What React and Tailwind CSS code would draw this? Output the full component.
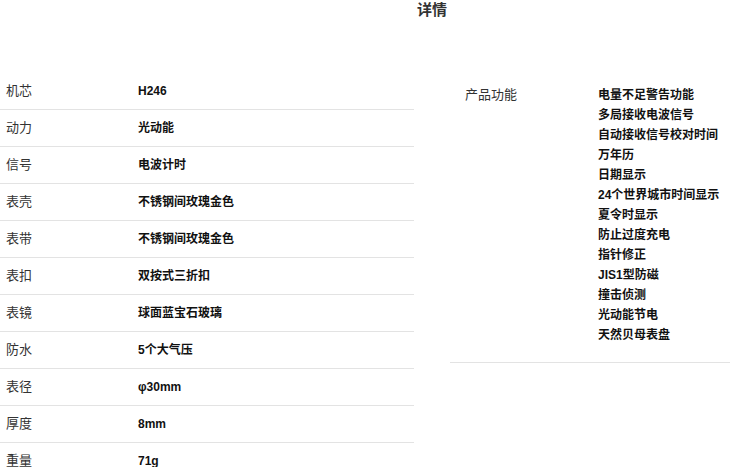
const specs = [
  ["机芯", "H246"],
  ["动力", "光动能"],
  ["信号", "电波计时"],
  ["表壳", "不锈钢间玫瑰金色"],
  ["表带", "不锈钢间玫瑰金色"],
  ["表扣", "双按式三折扣"],
  ["表镜", "球面蓝宝石玻璃"],
  ["防水", "5个大气压"],
  ["表径", "φ30mm"],
  ["厚度", "8mm"],
  ["重量", "71g"],
];

const features = [
  "电量不足警告功能",
  "多局接收电波信号",
  "自动接收信号校对时间",
  "万年历",
  "日期显示",
  "24个世界城市时间显示",
  "夏令时显示",
  "防止过度充电",
  "指针修正",
  "JIS1型防磁",
  "撞击侦测",
  "光动能节电",
  "天然贝母表盘",
];

const font = { fontFamily: '"Liberation Sans", "Noto Sans CJK SC", sans-serif' };

export default function App() {
  return (
    <main className="h-[467px] w-[730px] overflow-hidden bg-white" style={font}>
      <div className="w-[864px]">
        <h2 className="h-[22px] text-center text-[15px] font-bold leading-[20px] text-[#333]">详情</h2>

        <div className="mt-[51px] flex gap-9">
          {/* Left spec table */}
          <div className="w-[414px]">
            {specs.map(([label, value]) => (
              <div key={label} className="flex h-[37px] items-center border-b border-[#e3e3e3] pl-[6px]">
                <span className="w-[132px] text-[13px] text-[#333]">{label}</span>
                <span className="text-[12px] font-bold text-[#111]">{value}</span>
              </div>
            ))}
          </div>

          {/* Right feature list */}
          <div className="w-[414px] self-start">
            <div className="flex border-b border-[#e3e3e3] pb-[17px] pl-[15px] pt-[12px]">
              <span className="w-[133px] text-[13px] leading-[20px] text-[#333]">产品功能</span>
              <ul>
                {features.map((f) => (
                  <li key={f} className="text-[12px] font-bold leading-[20px] text-[#111]">
                    {f}
                  </li>
                ))}
              </ul>
            </div>
          </div>
        </div>
      </div>
    </main>
  );
}
